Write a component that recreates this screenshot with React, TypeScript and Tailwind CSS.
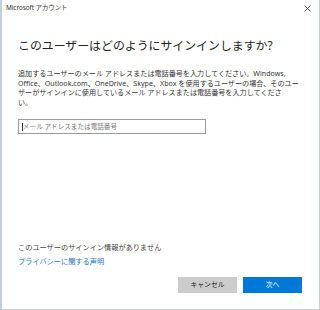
import React from 'react';

const font = "font-['Noto_Sans','Noto_Sans_CJK_JP',sans-serif]";

const CloseIcon: React.FC = () => (
    <svg width="7" height="7" viewBox="0 0 7 7" className="text-[#444]">
        <path d="M0.5 0.5 L6.5 6.5 M6.5 0.5 L0.5 6.5" stroke="currentColor" strokeWidth="0.9" />
    </svg>
);

const App: React.FC = () => {
    return (
        <div className={`w-[320px] h-[310px] bg-white flex flex-col border-l-2 border-r border-b border-[#c2d0dc] text-[#222] ${font}`}>
            {/* title bar */}
            <div className="h-[16px] flex items-center justify-between pl-[4px] pr-[8px]">
                <span className="text-[6.5px] text-[#333] tracking-[-0.1px]">Microsoft アカウント</span>
                <CloseIcon />
            </div>

            <div className="flex-1 flex flex-col px-[16px]">
                <h1 className="mt-[21px] text-[11.9px] leading-[16px] text-[#222] whitespace-nowrap">
                    このユーザーはどのようにサインインしますか?
                </h1>

                <div className="mt-[16px] text-[7.1px] leading-[9.6px] text-[#333]">
                    <div className="whitespace-nowrap">追加するユーザーのメール アドレスまたは電話番号を入力してください。Windows,</div>
                    <div className="whitespace-nowrap">Office、Outlook.com、OneDrive、Skype、Xbox を使用するユーザーの場合、そのユー</div>
                    <div className="whitespace-nowrap">ザーがサインインに使用しているメール アドレスまたは電話番号を入力してくださ</div>
                    <div className="whitespace-nowrap">い。</div>
                </div>

                <div className="mt-[12px] w-[188px] h-[15px] border border-[#9a9a9a] flex items-center pl-[3px]">
                    <span className="w-px h-[8px] bg-[#333]" />
                    <span className="text-[6.6px] text-[#777] whitespace-nowrap">メール アドレスまたは電話番号</span>
                </div>

                <div className="mt-auto text-[7.2px] leading-[14px] text-[#444]">
                    このユーザーのサインイン情報がありません
                </div>
                <a className="text-[7.2px] leading-[14px] text-[#1979c9]">プライバシーに関する声明</a>

                <div className="mt-[9px] mb-[16px] flex justify-end gap-[6px] pr-[1px]">
                    <button className="w-[59px] h-[16px] bg-[#cccccc] text-[6.8px] text-[#222]">キャンセル</button>
                    <button className="w-[59px] h-[16px] bg-[#0078d7] text-[6.8px] text-white">次へ</button>
                </div>
            </div>
        </div>
    );
};

export default App;
